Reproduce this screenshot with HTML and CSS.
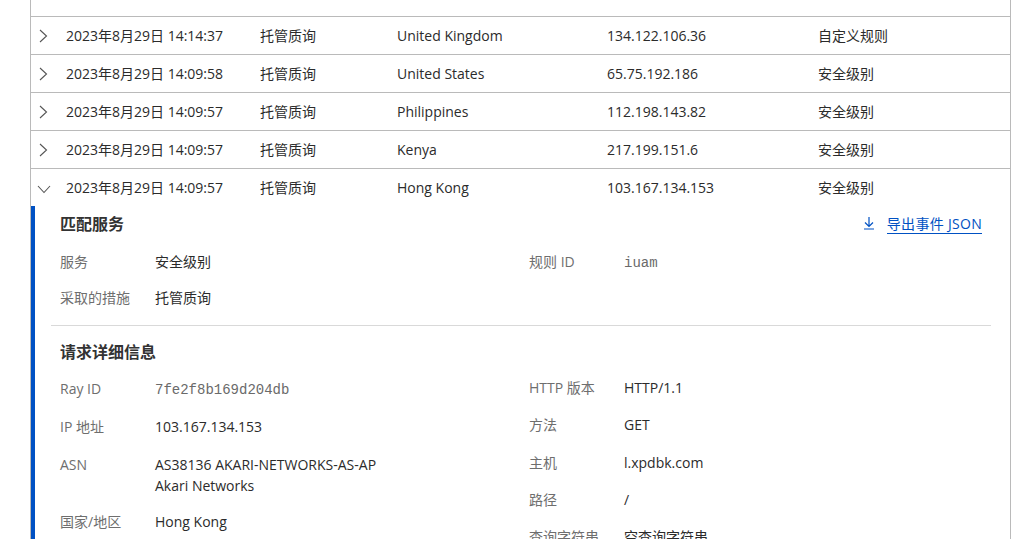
FILE: index.html
```html
<!DOCTYPE html>
<html lang="zh-CN">
<head>
<meta charset="utf-8">
<title>事件日志</title>
<link rel="stylesheet" href="styles.css">
</head>
<body>
<div class="table">
  <div class="head"></div>
  <div class="row">
    <span class="chev"><svg width="10" height="14" viewBox="0 0 10 14"><path d="M2 1 L8.5 7 L2 13" fill="none" stroke="#555" stroke-width="1.1"/></svg></span>
    <span>2023年8月29日 14:14:37</span><span>托管质询</span><span>United Kingdom</span><span>134.122.106.36</span><span>自定义规则</span>
  </div>
  <div class="row">
    <span class="chev"><svg width="10" height="14" viewBox="0 0 10 14"><path d="M2 1 L8.5 7 L2 13" fill="none" stroke="#555" stroke-width="1.1"/></svg></span>
    <span>2023年8月29日 14:09:58</span><span>托管质询</span><span>United States</span><span>65.75.192.186</span><span>安全级别</span>
  </div>
  <div class="row">
    <span class="chev"><svg width="10" height="14" viewBox="0 0 10 14"><path d="M2 1 L8.5 7 L2 13" fill="none" stroke="#555" stroke-width="1.1"/></svg></span>
    <span>2023年8月29日 14:09:57</span><span>托管质询</span><span>Philippines</span><span>112.198.143.82</span><span>安全级别</span>
  </div>
  <div class="row">
    <span class="chev"><svg width="10" height="14" viewBox="0 0 10 14"><path d="M2 1 L8.5 7 L2 13" fill="none" stroke="#555" stroke-width="1.1"/></svg></span>
    <span>2023年8月29日 14:09:57</span><span>托管质询</span><span>Kenya</span><span>217.199.151.6</span><span>安全级别</span>
  </div>
  <div class="row open">
    <span class="chev"><svg width="14" height="10" viewBox="0 0 14 10"><path d="M1 2 L7 8.5 L13 2" fill="none" stroke="#555" stroke-width="1.1"/></svg></span>
    <span>2023年8月29日 14:09:57</span><span>托管质询</span><span>Hong Kong</span><span>103.167.134.153</span><span>安全级别</span>
  </div>
  <div class="panel">
    <div class="section">
      <div class="sec-head">
        <h3>匹配服务</h3>
        <a class="export" href="#"><svg class="dl" width="12" height="14" viewBox="0 0 12 14"><path d="M6 1 V10 M2 6.5 L6 10.5 L10 6.5 M1 13 H11" fill="none" stroke="#0051c3" stroke-width="1.2"/></svg><span>导出事件 JSON</span></a>
      </div>
      <div class="cols">
        <dl class="list tight">
          <div class="item"><dt>服务</dt><dd>安全级别</dd></div>
          <div class="item"><dt>采取的措施</dt><dd>托管质询</dd></div>
        </dl>
        <dl class="list tight">
          <div class="item"><dt>规则 ID</dt><dd class="mono">iuam</dd></div>
        </dl>
      </div>
    </div>
    <hr class="divider">
    <div class="section">
      <div class="sec-head"><h3>请求详细信息</h3></div>
      <div class="cols">
        <dl class="list">
          <div class="item"><dt>Ray ID</dt><dd class="mono">7fe2f8b169d204db</dd></div>
          <div class="item"><dt>IP 地址</dt><dd>103.167.134.153</dd></div>
          <div class="item multi"><dt>ASN</dt><dd>AS38136 AKARI-NETWORKS-AS-AP<br>Akari Networks</dd></div>
          <div class="item"><dt>国家/地区</dt><dd>Hong Kong</dd></div>
        </dl>
        <dl class="list right">
          <div class="item"><dt>HTTP 版本</dt><dd>HTTP/1.1</dd></div>
          <div class="item"><dt>方法</dt><dd>GET</dd></div>
          <div class="item"><dt>主机</dt><dd>l.xpdbk.com</dd></div>
          <div class="item"><dt>路径</dt><dd>/</dd></div>
          <div class="item"><dt>查询字符串</dt><dd>空查询字符串</dd></div>
        </dl>
      </div>
    </div>
  </div>
</div>
</body>
</html>
```

FILE: styles.css
```css
* { box-sizing: border-box; }
html, body { margin: 0; padding: 0; background: #fff; }
body {
  font-family: "Segoe UI", "Open Sans", "Noto Sans CJK SC", sans-serif;
  font-size: 14px;
  color: #2b2b2b;
  overflow: hidden;
  height: 539px;
}
.table {
  margin-left: 30px;
  width: 981px;
  border-left: 1px solid #bababa;
  border-right: 1px solid #bababa;
}
.head { height: 16px; }
.row {
  display: grid;
  grid-template-columns: 35px 194px 137px 210px 211px 1fr;
  align-items: center;
  height: 38px;
  border-top: 1px solid #bababa;
  line-height: 20px;
  white-space: nowrap;
}
.chev { display: flex; align-items: center; padding-left: 7px; }
.row.open .chev { padding-left: 6px; padding-top: 2px; }
.chev svg { display: block; }
.panel {
  border-left: 4px solid #0051c3;
  padding: 7px 19px 0 16px;
  height: 333px;
  overflow: hidden;
}
.section { padding: 0 9px; }
.sec-head {
  display: flex;
  align-items: center;
  justify-content: space-between;
  height: 22px;
}
h3 {
  margin: 0;
  font-size: 16px;
  font-weight: 700;
  line-height: 22px;
  color: #333;
}
.export {
  display: flex;
  align-items: center;
  gap: 12px;
  color: #0051c3;
  text-decoration: none;
}
.export span {
  border-bottom: 1px solid #0051c3;
  line-height: 19px;
  letter-spacing: 0.3px;
}
.export .dl { display: block; margin-top: -2px; }
.cols {
  display: grid;
  grid-template-columns: 469px 1fr;
  margin-top: 16px;
}
.section + .divider + .section .cols { margin-top: 15px; }
.list {
  margin: 0;
  display: flex;
  flex-direction: column;
  gap: 17px;
}
.list.tight { gap: 15px; }
.list.right { gap: 16.3px; margin-top: -1px; }
.item {
  display: grid;
  grid-template-columns: 95px 1fr;
  line-height: 21px;
}
.item.multi { margin-bottom: -2px; }
dt { color: #6e6e6e; }
dd { margin: 0; color: #2b2b2b; }
.mono {
  font-family: "Liberation Mono", "Courier New", monospace;
  font-size: 14px;
  color: #6a6a6a;
  padding-top: 2px;
  margin-bottom: -2px;
}
.divider {
  border: 0;
  border-top: 1px solid #d9d9d9;
  margin: 17px 0 15px;
}
```
